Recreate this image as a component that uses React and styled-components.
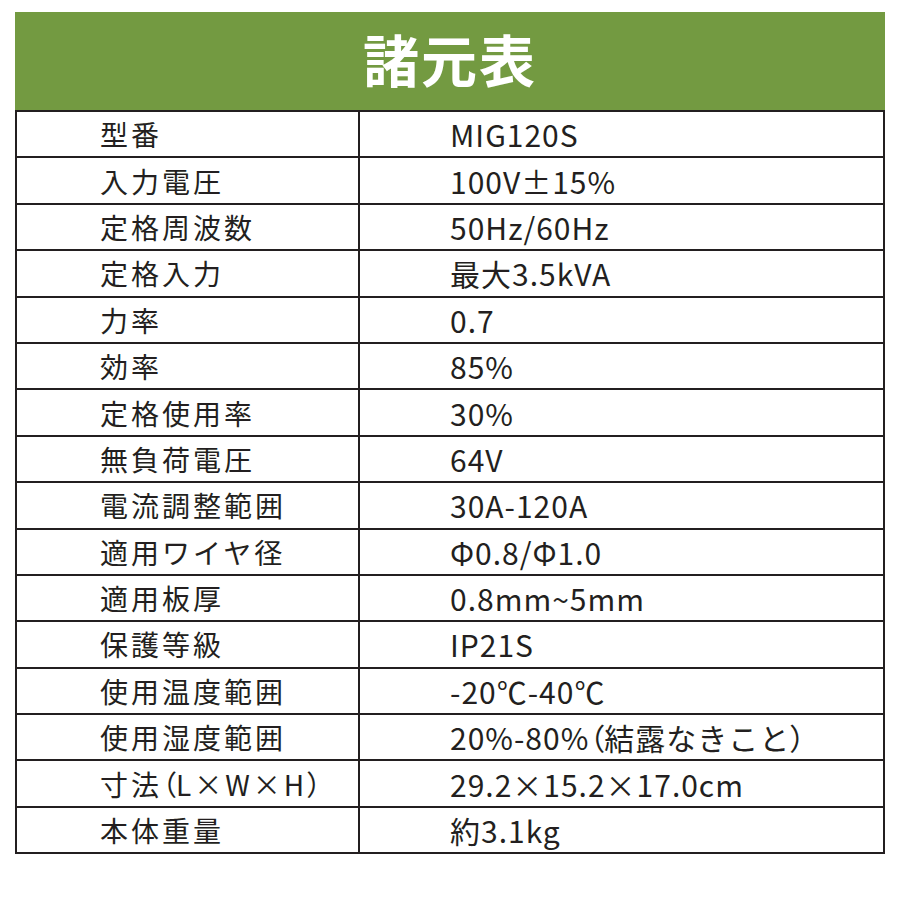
import styled, { createGlobalStyle } from 'styled-components';

const specs = [
  ['型番', 'MIG120S'],
  ['入力電圧', '100V±15%'],
  ['定格周波数', '50Hz/60Hz'],
  ['定格入力', '最大3.5kVA'],
  ['力率', '0.7'],
  ['効率', '85%'],
  ['定格使用率', '30%'],
  ['無負荷電圧', '64V'],
  ['電流調整範囲', '30A-120A'],
  ['適用ワイヤ径', 'Φ0.8/Φ1.0'],
  ['適用板厚', '0.8mm~5mm'],
  ['保護等級', 'IP21S'],
  ['使用温度範囲', '-20℃-40℃'],
  ['使用湿度範囲', '20%-80%（結露なきこと）'],
  ['寸法（L×W×H）', '29.2×15.2×17.0cm'],
  ['本体重量', '約3.1kg'],
];

// parens in the source are set half-width, so squeeze them
function withParens(text) {
  return text.split(/([（）])/).map((part, i) =>
    part === '（' || part === '）' ? <Paren key={i}>{part}</Paren> : part
  );
}

export default function App() {
  return (
    <>
      <GlobalStyle />
      <Page>
        <Header>諸元表</Header>
        <SpecTable>
          <tbody>
            {specs.map(([label, value]) => (
              <Row key={label}>
                <LabelCell>{withParens(label)}</LabelCell>
                <ValueCell>{withParens(value)}</ValueCell>
              </Row>
            ))}
          </tbody>
        </SpecTable>
      </Page>
    </>
  );
}

const GlobalStyle = createGlobalStyle`
  body {
    margin: 0;
    background: #fff;
    font-family: "Noto Sans CJK JP", "Noto Sans", sans-serif;
  }
`;

const Page = styled.div`
  width: 900px;
  padding: 12px 15px 0;
  box-sizing: border-box;
`;

const Header = styled.div`
  height: 98px;
  box-sizing: border-box;
  padding-bottom: 8px;
  background: #739a41;
  color: #fff;
  font-size: 56px;
  font-weight: 700;
  letter-spacing: 2px;
  display: flex;
  align-items: center;
  justify-content: center;
`;

const SpecTable = styled.table`
  width: 870px;
  border-collapse: collapse;
  border: 2px solid #231f20;
  table-layout: fixed;
  color: #231f20;
`;

const Row = styled.tr`
  height: 46.4px;
`;

const Paren = styled.span`
  font-feature-settings: "palt";
  letter-spacing: 0;
`;

const LabelCell = styled.td`
  width: 343px;
  padding: 0 0 0 83px;
  box-sizing: border-box;
  border: 2px solid #231f20;
  font-size: 28px;
  letter-spacing: 3px;
  line-height: 1;
  white-space: nowrap;
`;

const ValueCell = styled.td`
  padding: 0 0 0 90px;
  border: 2px solid #231f20;
  font-size: 30px;
  letter-spacing: 1px;
  line-height: 1;
  white-space: nowrap;
`;
